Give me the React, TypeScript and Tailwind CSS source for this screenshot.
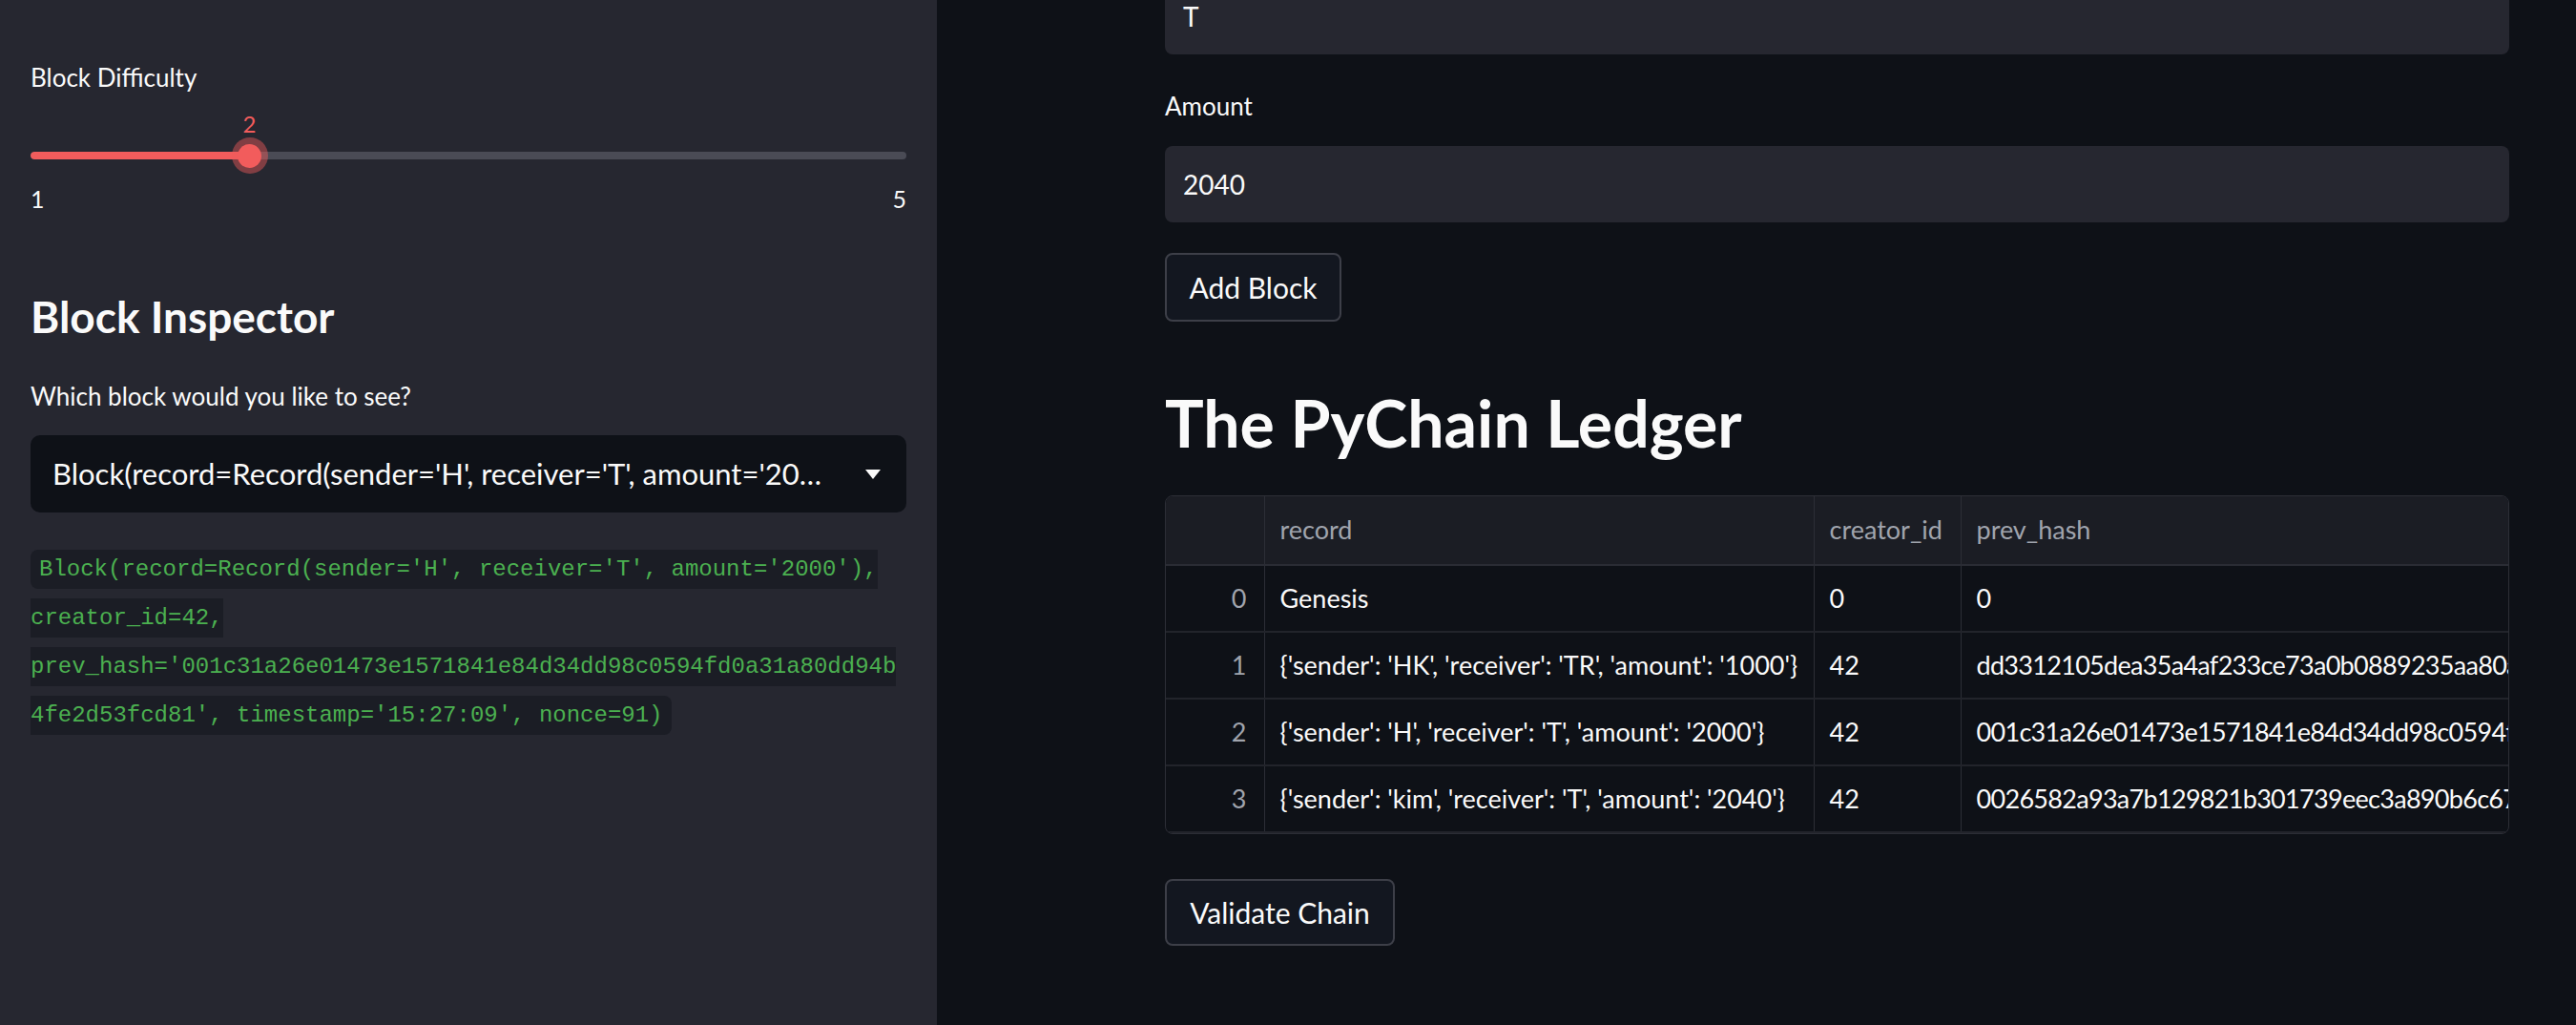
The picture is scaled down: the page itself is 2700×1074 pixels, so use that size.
import React from "react";

const sans = { fontFamily: "Lato, 'Noto Sans', sans-serif" };

const rows = [
  { i: 0, record: "Genesis", creator: "0", hash: "0" },
  {
    i: 1,
    record: "{'sender': 'HK', 'receiver': 'TR', 'amount': '1000'}",
    creator: "42",
    hash: "dd3312105dea35a4af233ce73a0b0889235aa80a4c7e1b0d2f98a3c4e5b61d7f",
  },
  {
    i: 2,
    record: "{'sender': 'H', 'receiver': 'T', 'amount': '2000'}",
    creator: "42",
    hash: "001c31a26e01473e1571841e84d34dd98c0594fd0a31a80dd94b4fe2d53fcd81",
  },
  {
    i: 3,
    record: "{'sender': 'kim', 'receiver': 'T', 'amount': '2040'}",
    creator: "42",
    hash: "0026582a93a7b129821b301739eec3a890b6c6781f4e2a9d0c35b7e8a1d24f60",
  },
];

function Slider() {
  const pct = 25;
  return (
    <div className="mt-[19px]">
      <div className="relative h-[24px]">
        <span
          className="absolute top-0 -translate-x-1/2 text-[24px] leading-[24px] text-[#f25c5c]"
          style={{ left: `${pct}%` }}
        >
          2
        </span>
      </div>
      <div className="relative mt-[2px] flex h-[38px] items-center">
        <div className="h-[8px] w-full overflow-hidden rounded-full bg-[#4a4b55]">
          <div className="h-full rounded-full bg-[#f25c5c]" style={{ width: `${pct}%` }} />
        </div>
        <div
          className="absolute top-1/2 flex h-[38px] w-[38px] -translate-x-1/2 -translate-y-1/2 items-center justify-center rounded-full bg-[#f25c5c]/45"
          style={{ left: `${pct}%` }}
        >
          <div className="h-[25px] w-[25px] rounded-full bg-[#f25c5c]" />
        </div>
      </div>
      <div className="mt-[14px] flex justify-between text-[25px] leading-[24px] text-[#fafafa]">
        <span>1</span>
        <span>5</span>
      </div>
    </div>
  );
}

function Sidebar() {
  return (
    <div className="h-full w-[982px] shrink-0 bg-[#262730] px-[32px] pt-[63px] text-[#fafafa]">
      <div className="text-[26px] leading-[36px]">Block Difficulty</div>
      <Slider />
      <h2 className="mt-[82px] text-[46px] font-bold leading-[60px]">Block Inspector</h2>
      <div className="mt-[35px] text-[26px] leading-[36px]">Which block would you like to see?</div>
      <div className="mt-[23px] flex h-[81px] items-center justify-between rounded-[10px] bg-[#0e1117] pl-[23px] pr-[26px]">
        <span className="overflow-hidden whitespace-nowrap text-[31px]">
          Block(record=Record(sender='H', receiver='T', amount='20…
        </span>
        <svg width="18" height="12" viewBox="0 0 18 12" className="shrink-0">
          <path d="M1 1 H17 L9 11 Z" fill="#fafafa" />
        </svg>
      </div>
      <div
        className="mt-[34px] text-[24px] leading-[51px]"
        style={{ fontFamily: "'Liberation Mono', 'DejaVu Sans Mono', monospace" }}
      >
        <code className="rounded-[8px] bg-[#1b1d25] py-[7px] pl-[9px] pr-[9px] text-[#4bb050]">
          Block(record=Record(sender='H', receiver='T', amount='2000'),
          <br />
          creator_id=42,
          <br />
          prev_hash='001c31a26e01473e1571841e84d34dd98c0594fd0a31a80dd94b
          <br />
          4fe2d53fcd81', timestamp='15:27:09', nonce=91)
        </code>
      </div>
    </div>
  );
}

function Ledger() {
  const th = "h-[72px] border-b-2 border-[#2a2c34] px-[16px] text-left align-middle font-normal text-[#a0a4ad]";
  const td = "h-[70px] border-b-2 border-[#22242b] px-[16px] align-middle whitespace-nowrap";
  return (
    <div className="mt-[31px] overflow-hidden rounded-[8px] border border-[#2c2e36]">
      <table className="w-max table-fixed border-collapse text-[27px]">
        <colgroup>
          <col className="w-[103px]" />
          <col className="w-[576px]" />
          <col className="w-[154px]" />
          <col className="w-[900px]" />
        </colgroup>
        <thead className="bg-[#1b1d24]">
          <tr>
            <th className={th}></th>
            <th className={`${th} border-l border-l-[#2c2e36]`}>record</th>
            <th className={`${th} border-l border-l-[#2c2e36]`}>creator_id</th>
            <th className={`${th} border-l border-l-[#2c2e36]`}>prev_hash</th>
          </tr>
        </thead>
        <tbody>
          {rows.map((r, idx) => {
            const last = idx === rows.length - 1 ? "border-b-0" : "";
            return (
              <tr key={r.i}>
                <td className={`${td} pr-[18px] text-right text-[#a0a4ad] ${last}`}>{r.i}</td>
                <td className={`${td} overflow-hidden border-l border-l-[#2c2e36] text-[#fafafa] ${last}`}>
                  {r.record}
                </td>
                <td className={`${td} border-l border-l-[#2c2e36] text-[#fafafa] ${last}`}>{r.creator}</td>
                <td className={`${td} border-l border-l-[#2c2e36] tracking-[-0.7px] text-[#fafafa] ${last}`}>
                  {r.hash}
                </td>
              </tr>
            );
          })}
        </tbody>
      </table>
    </div>
  );
}

function Main() {
  return (
    <div className="h-full min-w-0 flex-1 overflow-hidden bg-[#0e1117] pl-[239px] pr-[70px] text-[#fafafa]">
      <div className="-mt-[23px] flex h-[80px] items-center rounded-[8px] bg-[#262730] px-[19px] text-[28px]">T</div>
      <div className="mt-[36px] text-[26px] leading-[36px]">Amount</div>
      <div className="mt-[24px] flex h-[80px] items-center rounded-[8px] bg-[#262730] px-[19px] text-[28px]">2040</div>
      <button className="mt-[32px] flex h-[72px] w-[185px] items-center justify-center rounded-[8px] border-2 border-[#3d3f48] bg-[#131720] text-[30px] text-[#fafafa]">
        Add Block
      </button>
      <h1 className="mt-[60px] text-[68px] font-bold leading-[91px]">The PyChain Ledger</h1>
      <Ledger />
      <button className="mt-[47px] flex h-[70px] w-[241px] items-center justify-center rounded-[8px] border-2 border-[#3d3f48] bg-[#131720] text-[30px] text-[#fafafa]">
        Validate Chain
      </button>
    </div>
  );
}

export default function App() {
  return (
    <div className="flex h-[1074px] w-[2700px] overflow-hidden" style={sans}>
      <Sidebar />
      <Main />
    </div>
  );
}
